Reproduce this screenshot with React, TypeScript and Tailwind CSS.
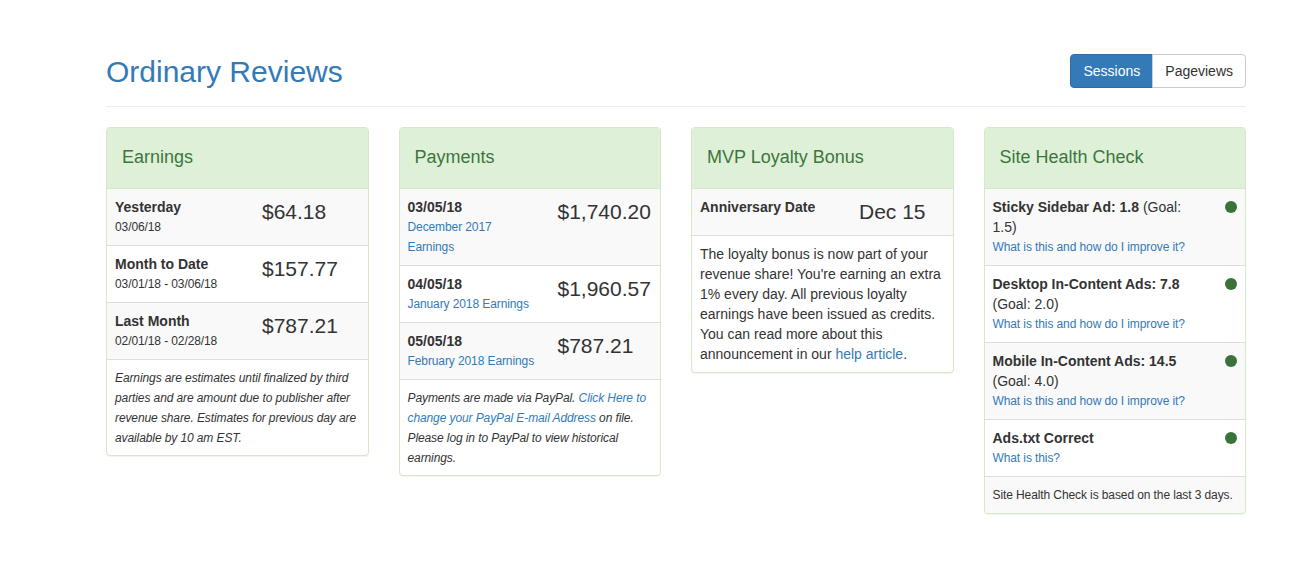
import { ReactNode } from 'react';

const font = { fontFamily: '"Liberation Sans", Arial, Helvetica, sans-serif' };

function Panel({ title, children }: { title: string; children: ReactNode }) {
  return (
    <div className="self-start overflow-hidden rounded border border-[#d6e9c6] bg-white shadow-[0_1px_1px_rgba(0,0,0,0.05)]">
      <div className="border-b border-[#d6e9c6] bg-[#dff0d8] px-[15px] py-5 text-[18px] leading-[1.1] text-[#3c763d]">
        {title}
      </div>
      {children}
    </div>
  );
}

function Row({ striped, first, children }: { striped?: boolean; first?: boolean; children: ReactNode }) {
  return (
    <div className={`flex items-start ${first ? '' : 'border-t border-[#ddd]'} ${striped ? 'bg-[#f9f9f9]' : 'bg-white'}`}>
      {children}
    </div>
  );
}

function Amount({ children }: { children: ReactNode }) {
  return <div className="p-2 text-[21px] leading-[30px] text-[#333]">{children}</div>;
}

const earnings = [
  { label: 'Yesterday', range: '03/06/18', amount: '$64.18' },
  { label: 'Month to Date', range: '03/01/18 - 03/06/18', amount: '$157.77' },
  { label: 'Last Month', range: '02/01/18 - 02/28/18', amount: '$787.21' },
];

const payments = [
  { date: '03/05/18', note: 'December 2017 Earnings', amount: '$1,740.20' },
  { date: '04/05/18', note: 'January 2018 Earnings', amount: '$1,960.57' },
  { date: '05/05/18', note: 'February 2018 Earnings', amount: '$787.21' },
];

const health = [
  { metric: 'Sticky Sidebar Ad: 1.8', goal: '(Goal: 1.5)', link: 'What is this and how do I improve it?' },
  { metric: 'Desktop In-Content Ads: 7.8', goal: '(Goal: 2.0)', link: 'What is this and how do I improve it?' },
  { metric: 'Mobile In-Content Ads: 14.5', goal: '(Goal: 4.0)', link: 'What is this and how do I improve it?' },
  { metric: 'Ads.txt Correct', goal: '', link: 'What is this?' },
];

export default function App() {
  return (
    <div className="min-h-[565px] w-[1300px] bg-white text-[14px] leading-5 text-[#333]" style={font}>
      <div className="ml-[106px] w-[1140px] pt-[54px]">
        <div className="flex items-center justify-between border-b border-[#eee] pb-[18px]">
          <h1 className="text-[30px] font-normal leading-[33px] text-[#337ab7]">Ordinary Reviews</h1>
          <div className="flex">
            <button className="rounded-l border border-[#2e6da4] bg-[#337ab7] px-3 py-[6px] text-[14px] leading-5 text-white">
              Sessions
            </button>
            <button className="-ml-px rounded-r border border-[#ccc] bg-white px-3 py-[6px] text-[14px] leading-5 text-[#333]">
              Pageviews
            </button>
          </div>
        </div>

        <div className="mt-5 grid grid-cols-4 items-start gap-[30px]">
          <Panel title="Earnings">
            {earnings.map((e, i) => (
              <Row key={e.label} first={i === 0} striped={i % 2 === 0}>
                <div className="w-[147px] shrink-0 p-2">
                  <div className="font-bold">{e.label}</div>
                  <div className="text-[12px] tracking-[-0.1px]">{e.range}</div>
                </div>
                <Amount>{e.amount}</Amount>
              </Row>
            ))}
            <div className="border-t border-[#ddd] px-2 pb-[7px] pt-2 text-[12px] italic leading-5 tracking-[-0.1px]">
              Earnings are estimates until finalized by third parties and are amount due to publisher after revenue
              share. Estimates for previous day are available by 10 am EST.
            </div>
          </Panel>

          <Panel title="Payments">
            {payments.map((p, i) => (
              <Row key={p.date} first={i === 0} striped={i % 2 === 0}>
                <div className="w-[150px] shrink-0 p-2">
                  <div className="font-bold">{p.date}</div>
                  <a className="block max-w-[128px] text-[12px] tracking-[-0.1px] text-[#337ab7]">{p.note}</a>
                </div>
                <Amount>{p.amount}</Amount>
              </Row>
            ))}
            <div className="border-t border-[#ddd] px-2 pb-[7px] pt-2 text-[12px] italic leading-5 tracking-[-0.1px]">
              Payments are made via PayPal.{' '}
              <a className="text-[#337ab7]">Click Here to change your PayPal E-mail Address</a> on file. Please log in
              to PayPal to view historical earnings.
            </div>
          </Panel>

          <Panel title="MVP Loyalty Bonus">
            <Row first striped>
              <div className="w-[159px] shrink-0 p-2 font-bold">Anniversary Date</div>
              <Amount>Dec 15</Amount>
            </Row>
            <div className="border-t border-[#ddd] p-2 text-[14px] leading-5">
              The loyalty bonus is now part of your revenue share! You're earning an extra 1% every day. All previous
              loyalty earnings have been issued as credits. You can read more about this announcement in our{' '}
              <a className="text-[#337ab7]">help article</a>.
            </div>
          </Panel>

          <Panel title="Site Health Check">
            {health.map((h, i) => (
              <Row key={h.metric} first={i === 0} striped={i % 2 === 0}>
                <div className="w-[212px] shrink-0 p-2">
                  <div>
                    <span className="font-bold">{h.metric}</span>
                    {h.goal && <> {h.goal}</>}
                  </div>
                  <a className="block whitespace-nowrap text-[12px] tracking-[-0.1px] text-[#337ab7]">{h.link}</a>
                </div>
                <div className="flex flex-1 justify-end p-2">
                  <div className="flex h-5 items-center">
                    <span className="block h-3 w-3 rounded-full bg-[#3a7239]" />
                  </div>
                </div>
              </Row>
            ))}
            <div className="border-t border-[#ddd] bg-[#f9f9f9] p-2 text-[12px] leading-5 tracking-[-0.1px]">
              Site Health Check is based on the last 3 days.
            </div>
          </Panel>
        </div>
      </div>
    </div>
  );
}
